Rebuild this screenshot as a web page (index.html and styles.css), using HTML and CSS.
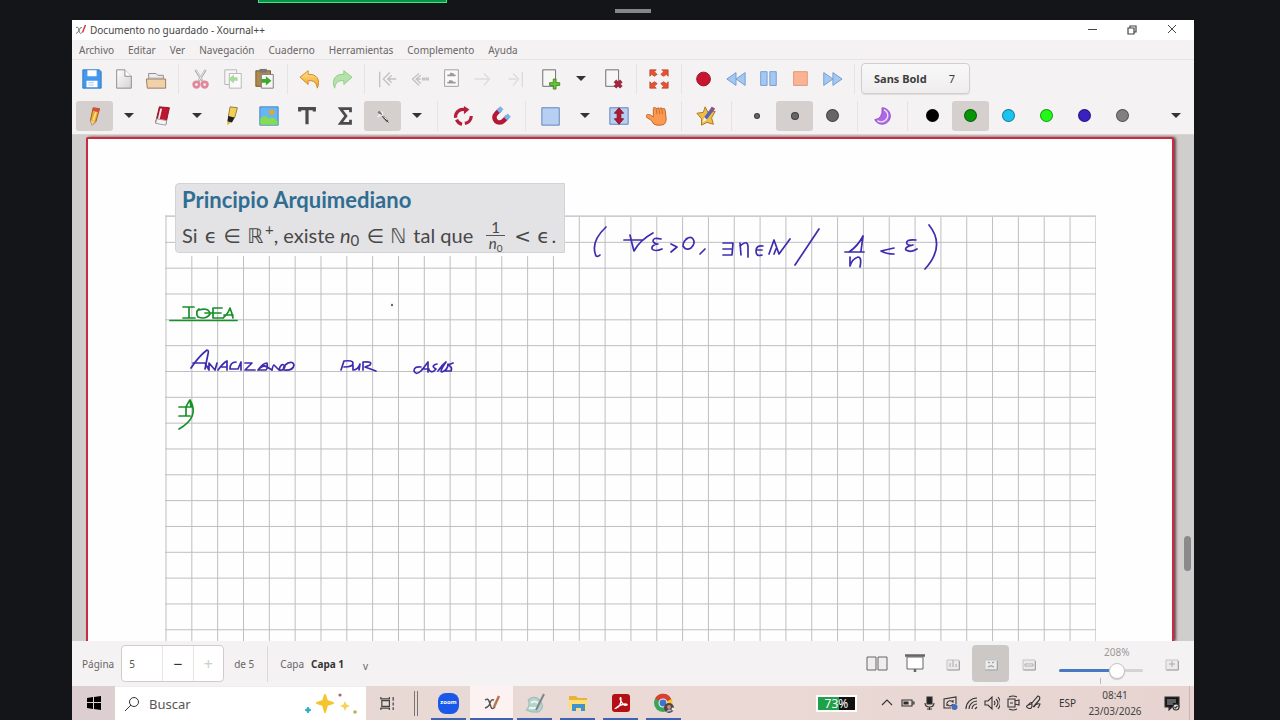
FILE: index.html
```html
<!DOCTYPE html>
<html lang="es">
<head>
<meta charset="utf-8">
<title>Documento no guardado - Xournal++</title>
<link rel="stylesheet" href="styles.css">
</head>
<body>
<svg class="defs" aria-hidden="true">
  <defs>
    <linearGradient id="gold" x1="0" y1="0" x2="0" y2="1"><stop offset="0" stop-color="#ffe08a"/><stop offset="1" stop-color="#f0a020"/></linearGradient>
    <linearGradient id="paper" x1="0" y1="0" x2="1" y2="1"><stop offset="0" stop-color="#fff"/><stop offset="1" stop-color="#d4d2d2"/></linearGradient>
    <symbol id="ghost" viewBox="0 0 14 14"><path d="M1 3h12v10H1z" fill="#ecebeb" stroke="#c5c3c3"/><path d="M1.500 13h12V4" fill="none" stroke="#a5a3a3"/></symbol>
  </defs>
</svg>

<div class="share-bar"><span class="share-frame"></span><span class="share-grip"></span></div>

<main class="window">
  <header class="titlebar">
    <svg class="app-mark" viewBox="0 0 12 12"><path d="M1 3.500q2-1 2.500 1l1 4q.5 2 2.500 0M7 3.500Q5 3 4 6T1 9.500" fill="none" stroke="#777" stroke-width="1"/><path d="M10.500 1 7.500 8.500" stroke="#d33b3b" stroke-width="1.500"/></svg>
    <h1 class="window-title">Documento no guardado - Xournal++</h1>
    <div class="window-controls">
      <button aria-label="Minimizar"><svg viewBox="0 0 12 12"><path d="M2 5.500h9" stroke="#444"/></svg></button>
      <button aria-label="Restaurar"><svg viewBox="0 0 12 12"><path d="M2 4h6v6H2zM4 4V2h6v6H8" fill="none" stroke="#444" stroke-width="1.200"/></svg></button>
      <button aria-label="Cerrar"><svg viewBox="0 0 12 12"><path d="m2 1 8 8M10 1l-8 8" stroke="#444"/></svg></button>
    </div>
  </header>

  <nav class="menubar">
    <button>Archivo</button><button>Editar</button><button>Ver</button><button>Navegación</button><button>Cuaderno</button><button>Herramientas</button><button>Complemento</button><button>Ayuda</button>
  </nav>

  <div class="toolbar main-tools">
    <button class="tool" aria-label="Guardar"><svg viewBox="0 0 24 24"><path d="M2 2h18l2 2v18H2z" fill="#4599ec" stroke="#2f76bd"/><path d="M7 2.500h10V9H7zM6 14h12v7H6z" fill="#fff"/><path d="M8 16h6M8 18.500h6" stroke="#a9c6e5"/></svg></button>
    <button class="tool" aria-label="Nuevo"><svg viewBox="0 0 24 24"><path d="M4 2h9l7 7v13H4z" fill="url(#paper)" stroke="#888"/><path d="M13 2v7h7" fill="#fff" stroke="#888"/></svg></button>
    <button class="tool" aria-label="Abrir"><svg viewBox="0 0 24 24"><path d="M4 15V6h8l2 2h6v8" fill="#efeded" stroke="#8a8580"/><path d="M1.500 12h21v10h-20z" fill="#f0d1a8" stroke="#93775c"/><path d="M3 11h18" stroke="#aaa"/></svg></button>
    <span class="sep"></span>
    <button class="tool" aria-label="Cortar"><svg viewBox="0 0 24 24"><path d="m6 2 8 13M17 2 9 15" stroke="#aaa" stroke-width="2.500"/><path d="m6.500 2 7 12M16.500 2l-7 12" stroke="#eee"/><g fill="none" stroke="#e0889c" stroke-width="3"><circle cx="7" cy="18" r="3"/><circle cx="16" cy="18" r="3"/></g></svg></button>
    <button class="tool" aria-label="Copiar"><svg viewBox="0 0 24 24"><path d="M3 2h13v16H3z" fill="#f5f5f4" stroke="#b5b5b3"/><path d="M8 6h13v16H8z" fill="#fafafa" stroke="#b5b5b3"/><path d="m7 12 6-5v3h4v4h-4v3z" fill="#a9d99f"/></svg></button>
    <button class="tool" aria-label="Pegar"><svg viewBox="0 0 24 24"><path d="M2 3h16v17H2z" fill="#b0884e" stroke="#73582e"/><path d="M6 1h8v4H6z" fill="#777"/><path d="M8 7h13v15H8z" fill="#f6f6f5" stroke="#777"/><path d="M8 12h5V9l6 5-6 5v-3H8z" fill="#3ca82f"/></svg></button>
    <span class="sep"></span>
    <button class="tool" aria-label="Deshacer"><svg viewBox="0 0 24 24"><path d="m1 10 9-7v4c9-1 14 6 10 15-1-6-4-9-10-8v4z" fill="url(#gold)" stroke="#c9872b"/></svg></button>
    <button class="tool" aria-label="Rehacer"><svg viewBox="0 0 24 24"><path d="m23 10-9-7v4C5 6 0 13 4 22c1-6 4-9 10-8v4z" fill="#b4e2a8" stroke="#8fca85"/></svg></button>
    <span class="sep"></span>
    <button class="tool" aria-label="Primera página"><svg viewBox="0 0 24 24" class="dim"><path d="M4 4v17M15 5l-7 7 7 7M22 12H12m5-4-4 4 4 4"/></svg></button>
    <button class="tool" aria-label="Página anterior"><svg viewBox="0 0 24 24" class="dim"><path d="m12 6-7 6 7 7M14 8l-5 4 5 5M10 12h4m2-1h2v2h-2zm4 0h2v2h-2z"/></svg></button>
    <button class="tool" aria-label="Ir a página"><svg viewBox="0 0 24 24"><path d="M5 2h15v18H5z" fill="#fafafa" stroke="#999"/><path d="M8 8h9M11 6l4 1M8 16h9M10 14l4 1" stroke="#999" stroke-width="2"/></svg></button>
    <button class="tool" aria-label="Página siguiente"><svg viewBox="0 0 24 24" class="dim faint"><path d="M3 12h15M13 6l6 6-6 7"/></svg></button>
    <button class="tool" aria-label="Última página"><svg viewBox="0 0 24 24" class="dim faint"><path d="M5 12h9M10 6l6 6-6 7M20 4v17"/></svg></button>
    <span class="split">
      <button class="tool" aria-label="Añadir página"><svg viewBox="0 0 24 24"><path d="M3 2h14v18H3z" fill="#f7f7f6" stroke="#666"/><path d="M14.500 12h3v4h4v3h-4v4h-3v-4h-4v-3h4z" fill="#6cc339" stroke="#3d8a1c"/></svg></button>
      <button class="arrow" aria-label="Tipo de página"></button>
    </span>
    <button class="tool" aria-label="Borrar página"><svg viewBox="0 0 24 24"><path d="M3 2h14v18H3z" fill="#f7f7f6" stroke="#666"/><path d="m13 14 7 7m0-7-7 7" stroke="#a32743" stroke-width="4"/></svg></button>
    <span class="sep"></span>
    <button class="tool" aria-label="Pantalla completa"><svg viewBox="0 0 24 24"><g fill="#e5532f" stroke="#b8432a" stroke-width=".8"><path d="M2 2h7L7 4l3 3-3 2-3-2-2 2zM22 2h-7l2 2-3 3 3 2 3-2 2 2zM2 22h7l-2-2 3-3-3-2-3 2-2-2zM22 22h-7l2-2-3-3 3-2 3 2 2-2z"/></g></svg></button>
    <span class="sep"></span>
    <button class="tool" aria-label="Grabar"><svg viewBox="0 0 24 24"><circle cx="11.500" cy="12" r="7.500" fill="#c9152f" stroke="#8f1022"/></svg></button>
    <button class="tool" aria-label="Retroceder"><svg viewBox="0 0 24 24"><path d="M12 5v14l-10-7zM22 5v14l-10-7z" fill="#a5c8f3" stroke="#7099cf"/></svg></button>
    <button class="tool" aria-label="Pausa"><svg viewBox="0 0 24 24"><path d="M4 4h7v15H4zM14 4h7v15h-7z" fill="#a5c8f3" stroke="#7099cf"/></svg></button>
    <button class="tool" aria-label="Detener"><svg viewBox="0 0 24 24"><path d="M5 4h15v15H5z" fill="#fbb393" stroke="#dd957a"/></svg></button>
    <button class="tool" aria-label="Avanzar"><svg viewBox="0 0 24 24"><path d="M3 5v14l10-7zM13 5v14l10-7z" fill="#a5c8f3" stroke="#7099cf"/></svg></button>
    <span class="sep"></span>
    <button class="font-button"><b>Sans Bold</b><span>7</span></button>
  </div>

  <div class="toolbar draw-tools">
    <button class="tool selected" aria-label="Lápiz"><svg viewBox="0 0 24 24"><path d="m10 3 7 1-4 14-4 4-2-5z" fill="#f4a528" stroke="#925a20"/><path d="m10 3 7 1-1 4-7-2z" fill="#d84a43"/><path d="m13 8-3 9" stroke="#ffe08a" stroke-width="2"/><path d="m7 17 5 1-3 4z" fill="#e9cda1"/></svg></button>
    <button class="arrow" aria-label="Opciones de lápiz"></button>
    <button class="tool" aria-label="Borrador"><svg viewBox="0 0 24 24"><path d="m8 2 11 1-4 18-11-2z" fill="#c2132f" stroke="#82152a"/><path d="m10 4-3 13" stroke="#f2f2f2" stroke-width="2"/><path d="m5 15 11 2-1 5-11-2z" fill="#f6f5f5" stroke="#999"/></svg></button>
    <button class="arrow" aria-label="Opciones de borrador"></button>
    <button class="tool" aria-label="Resaltador"><svg viewBox="0 0 24 24"><path d="m11 2 8 1-3 11-7-1z" fill="#f5cf52" stroke="#8c7640"/><path d="m9 12 7 2-3 5-5-1z" fill="#222"/><path d="m8 18 4 1-4 3z" fill="#e7b828"/></svg></button>
    <button class="tool" aria-label="Imagen"><svg viewBox="0 0 24 24"><path d="M2 2h20v20H2z" fill="#65b6f2" stroke="#477fba"/><circle cx="15" cy="8" r="3" fill="#e1a53a"/><path d="M2.500 15q5-6 9 0 5-4 10 3v3.500h-19z" fill="#85db51"/></svg></button>
    <button class="tool" aria-label="Texto"><svg viewBox="0 0 24 24"><path d="M4 7V4h16v3M12 4v17" fill="none" stroke="#4b4b4d" stroke-width="3.500"/></svg></button>
    <button class="tool" aria-label="Fórmula TeX"><svg viewBox="0 0 24 24"><path d="M18 8V4H7l6 8-6 8h11v-4" fill="none" stroke="#4b4b4d" stroke-width="3"/></svg></button>
    <button class="tool selected" aria-label="Reconocer formas"><svg viewBox="0 0 24 24"><path d="m7 7 10 11" stroke="#777" stroke-width="2.500"/><path d="m8 10 8 6M11 7l1 5M6 13l3-2" stroke="#fff" stroke-width="1.200"/><path d="m11 12 7 7" stroke="#333"/></svg></button>
    <button class="arrow" aria-label="Más formas"></button>
    <span class="sep"></span>
    <button class="tool" aria-label="Ajustar rotación"><svg viewBox="0 0 24 24"><path d="M4 14A8 8 0 0 1 14 5M21 12a8 8 0 0 1-7 8M11 21a8 8 0 0 1-6-5" fill="none" stroke="#b41e3b" stroke-width="3.500"/><path d="m13 1 6 4-6 5z" fill="#b41e3b"/></svg></button>
    <button class="tool" aria-label="Ajustar a la cuadrícula"><svg viewBox="0 0 24 24"><path d="M11 5 7 9c-6 6 2 14 8 8l4-4" fill="none" stroke="#b51836" stroke-width="5"/><path d="m13 3-4 4M21 11l-4 4" stroke="#76b4f0" stroke-width="5"/></svg></button>
    <span class="sep"></span>
    <button class="tool" aria-label="Seleccionar rectángulo"><svg viewBox="0 0 24 24"><path d="M2 3h19v19H2z" fill="#b7cff2" stroke="#587fb6"/></svg></button>
    <button class="arrow" aria-label="Más selecciones"></button>
    <button class="tool" aria-label="Espacio vertical"><svg viewBox="0 0 24 24"><path d="M2 3h20v18H2z" fill="#b7cff2" stroke="#587fb6"/><path d="m12 3 5 6h-3v6h3l-5 6-5-6h3V9H7z" fill="#b31935" stroke="#811529"/></svg></button>
    <button class="tool" aria-label="Mano"><svg viewBox="0 0 24 24"><path d="M8 13V4q0-2 2-1l2 1q1-2 3 0 1-2 3 0 3-1 3 2l1 9q0 7-6 7h-4q-4 0-6-5l-6-4q0-4 5-2z" fill="#fb9950" stroke="#bd6329"/><path d="m11 4 1 6m2-6 1 6m2-6 1 6" stroke="#c66a2b"/></svg></button>
    <span class="sep"></span>
    <button class="tool" aria-label="Pluma predeterminada"><svg viewBox="0 0 24 24"><path d="m10 2 3 6 8-1-4 7 2 7-7-2-6 3v-7L1 9l7-1z" fill="#f3bd45" stroke="#a57225"/><path d="m19 3-9 12" stroke="#5266ad" stroke-width="4"/><path d="m19 3-2 3" stroke="#a34b72" stroke-width="4"/><path d="m9 13 3 3-5 3z" fill="#eee"/></svg></button>
    <span class="sep"></span>
    <button class="tool" aria-label="Fino"><i class="dot fine"></i></button>
    <button class="tool selected" aria-label="Medio"><i class="dot medium"></i></button>
    <button class="tool" aria-label="Grueso"><i class="dot thick"></i></button>
    <span class="sep"></span>
    <button class="tool" aria-label="Relleno"><svg viewBox="0 0 24 24"><path d="M11 3a9 9 0 1 1-8 13q9-1 8-13z" fill="#ad69e5" stroke="#8c4bc6"/><path d="M13 5a7 7 0 1 1-7 12" fill="none" stroke="#efe2fa" stroke-width="1.500"/></svg></button>
    <span class="sep"></span>
    <button class="tool" aria-label="Negro"><i class="dot black"></i></button>
    <button class="tool selected" aria-label="Verde"><i class="dot green"></i></button>
    <button class="tool" aria-label="Celeste"><i class="dot cyan"></i></button>
    <button class="tool" aria-label="Verde claro"><i class="dot lime"></i></button>
    <button class="tool" aria-label="Azul"><i class="dot blue"></i></button>
    <button class="tool" aria-label="Gris"><i class="dot gray"></i></button>
    <button class="arrow overflow" aria-label="Más herramientas"></button>
  </div>

  <section class="canvas">
    <article class="page">
      <svg class="grid" viewBox="88 139 1084 502">
        <defs><pattern id="cells" x="165.500" y="216" width="25.830" height="25.830" patternUnits="userSpaceOnUse"><path d="M0 0V25.830M0 0H25.830" stroke="#bebec2" stroke-width="2"/></pattern></defs>
        <rect x="165" y="215.500" width="931" height="430" fill="url(#cells)"/>
        <path d="M165 216h931" stroke="#d2d2d5" stroke-width="1.500"/>
      </svg>
      <div class="theorem">
        <h2>Principio Arquimediano</h2>
        <p>Si <span class="m">ϵ ∈ ℝ</span><sup>+</sup>, existe <em>n</em><sub>0</sub> <span class="m">∈ ℕ</span> tal que <span class="fraction"><span>1</span><span><em>n</em><sub>0</sub></span></span> <span class="m">&lt; ϵ</span>.</p>
      </div>
      <svg class="ink" viewBox="88 139 1084 502" role="img" aria-label="(∀ε&gt;0, ∃n∈N / 1/n &lt; ε) — Idea — Analizando por casos — I)">
        <g class="ink-blue">
          <path d="M606 227q-16 15-10 29 2 1 4-1"/>
          <path d="M624 240l19 0M630 235q2 9 4 16 6-11 19-18"/>
          <path d="M661 239q-8-2-8 2 1 3 5 3-7 1-6 5 3 3 10 0"/>
          <path d="M671 244l6 3-6 5"/><path d="M688 238q-5 3-5 8 3 5 8 2 5-5 2-9-2-3-7 0M705 249l-5 5"/>
          <path d="M723 243h10l-1 12h-9M723 249h9M740 243l1 12M740 246q8-7 8 1v10M763 246q-7-1-7 5t6 4M757 250h5M769 254l5-14 5 14 11-15M774 254l2-5"/>
          <path d="M819 229l-24 36M849 252q9-6 14-16l-2 15M845 252h19M850 257v9q2-7 8-9 4 0 2 10"/>
          <path d="M894 248l-13 3q5 3 13 3M916 240q-11-1-9 4 2 2 6 1-9 2-7 5 5 3 11-1M929 225q17 21-4 44"/>
        </g>
        <g class="ink-green"><path d="M183 307h11M189 307v11M183 318h12M199 309q-4 3-1 8 8 3 12-3-1-7-11-4M222 308h-9v10h9M205 313h16M223 318q5-4 7-10 2 5 3 10M224 315h9M170 320.500h67"/><path d="M179 407h11M186 407v9M179 416h11M190 400q10 17-11 29M186 407q3-6 4-7l1 7"/></g>
        <g class="ink-blue"><path d="M191 368q8-12 16-18 2 0 1 4l-3 15M193 363h12l4 7v-7l6 7 2-7M218 370q5-7 9-9v9M220 367h7M236 362q-6 0-6 7h8l3-7v8M245 363h7l-7 7h10M258 370q5-7 9-7 1 6-1 7h-8M258 370q5-6 9-3l5 3q1-5 2-5l5 5q2-8 6-4-1 5-6 4M288 363q-6 4-4 7 9 1 10-5-1-4-6-2"/><path d="M341 370l3-9q9-1 9 2 0 4-9 4M353 365v5q5 0 7-6l-1 6M363 370v-8q10-1 7 3l-5 2 11 4"/><path d="M421 367q-7-1-7 4 2 5 8-1l6-8v10M422 369h7M437 364q-7 2-1 5-4 5-7 1M438 371q4-6 8-9-7 10-4 10 6-2 6-8M453 363l-5 2q5 2 3 6h-6"/></g>
        <circle cx="392" cy="305" r="1.200" fill="#5a7462"/>
      </svg>
    </article>
    <span class="scroll-thumb"></span>
  </section>

  <footer class="statusbar">
    <label for="page-number">Página</label>
    <div class="spinner"><input id="page-number" value="5"><button aria-label="Anterior">−</button><button class="disabled" aria-label="Siguiente">+</button></div>
    <span class="page-total">de 5</span>
    <div class="layer"><label for="layer">Capa</label><select id="layer"><option>Capa 1</option></select><span class="chevron">v</span></div>
    <div class="view-tools">
      <button aria-label="Dos páginas"><svg viewBox="0 0 22 22"><path d="M1 4h9v13H1zM12 4h9v13h-9z" fill="#eee" stroke="#666"/></svg></button>
      <button aria-label="Presentación"><svg viewBox="0 0 22 22"><path d="M3 4h16v12H3z" fill="#fff" stroke="#666"/><path d="M1 2.500h20M11 16v3" stroke="#666" stroke-width="2.500"/></svg></button>
      <button aria-label="Tamaño real"><svg viewBox="0 0 22 22"><use href="#ghost" x="4" y="4" width="14" height="14"/><path d="M8 14v-4m3 4V7m3 7v-3" stroke="#aaa"/></svg></button>
      <button class="selected" aria-label="Ajustar zoom"><svg viewBox="0 0 22 22"><use href="#ghost" x="4" y="4" width="14" height="14"/><path d="m8 9 2 1m4-1-2 1m-4 4 2-1h2l2 1" stroke="#888" fill="none"/></svg></button>
      <button aria-label="Alejar"><svg viewBox="0 0 22 22"><use href="#ghost" x="4" y="4" width="14" height="14"/><path d="M7 11h8v2H7z" stroke="#aaa" fill="#fff"/></svg></button>
      <div class="zoom"><label for="zoom">208%</label><input id="zoom" type="range" min="0" max="100" value="73"><span class="zoom-tick"></span></div>
      <button aria-label="Acercar"><svg viewBox="0 0 22 22"><use href="#ghost" x="4" y="4" width="14" height="14"/><path d="M11 8v6M8 11h6" stroke="#aaa"/></svg></button>
    </div>
  </footer>

  <nav class="taskbar">
    <button class="start" aria-label="Inicio"><svg viewBox="0 0 16 16"><path d="m1 3 6-1v5H1zm7-1 7-1v6H8zM1 8h6v6l-6-1zm7 0h7v7l-7-1z"/></svg></button>
    <div class="search">
      <svg class="lens" viewBox="0 0 16 16"><circle cx="10" cy="6" r="4.500" fill="none" stroke="#333"/><path d="m7 9-6 6" stroke="#333"/></svg>
      <input aria-label="Buscar" placeholder="Buscar">
      <svg class="sparkles" viewBox="0 0 54 24"><path d="m21 3 2 6 6 2-6 2-2 7-2-7-6-2 6-2z" fill="#f5c431" stroke="#f5c431" stroke-width="2" stroke-linejoin="round"/><path d="m4 15 1 2 2 1-2 1-1 2-1-2-2-1 2-1z" fill="#2daac9" stroke="#2daac9"/><path d="m41 9 1.500 3.500L46 14l-3.500 1.500L41 19l-1.500-3.500L36 14l3.500-1.500z" fill="#f5d356"/><circle cx="36" cy="3" r="1.600" fill="#a4656f"/><circle cx="51" cy="20" r="1.800" fill="#b7b454"/></svg>
    </div>
    <button class="task-view" aria-label="Vista de tareas"><svg viewBox="0 0 18 18"><path d="M2 2v2h9V2M2 16v-2h9v2M3 6h8v6H3zM15 2v4m0 2v3m0 2v3" fill="none" stroke="#444" stroke-width="1.300"/></svg></button>
    <span class="double-bar"></span>
    <div class="apps">
      <button aria-label="Zoom"><span class="zoom-app">zoom</span></button>
      <button class="active" aria-label="Xournal++"><svg viewBox="0 0 22 22"><path d="M4 8q3-2 4 1l2 6q1 3 4 0M13 8q-3-1-4 3t-5 5" fill="none" stroke="#555" stroke-width="1.400"/><path d="m18 4-5 11" stroke="#ba7653" stroke-width="2.500"/></svg></button>
      <button aria-label="OpenBoard"><svg viewBox="0 0 22 22"><path d="M4 8q5-5 11-1 7 8 0 13-8 1-13-2 5-5 2-10z" fill="#b5d2cc" stroke="#98bbb7"/><path d="M5 16h8M7 11q3-3 7 0" stroke="#eef7ef" stroke-width="2" fill="none"/><path d="m20 2-8 16" stroke="#7a8687" stroke-width="2"/></svg></button>
      <button aria-label="Explorador"><svg viewBox="0 0 22 22"><path d="M2 4h7l2 2h9v12H2z" fill="#e7b33c"/><path d="M2 8h18v10H2z" fill="#ffdf70"/><path d="M5 19v-7h13v7h-4v-3H9v3z" fill="#4193d0"/></svg></button>
      <button aria-label="Acrobat"><svg viewBox="0 0 22 22"><rect x="2" y="2" width="18" height="18" rx="3" fill="#b40f14"/><path d="M6 16c4-1 5-5 5-9 0-3-2-1 0 2 2 4 4 5 6 4 1-2-7-1-11 3z" fill="none" stroke="#fff" stroke-width="1.300"/></svg></button>
      <button aria-label="Chrome"><svg viewBox="0 0 22 22"><circle cx="10" cy="11" r="9" fill="#39a55a"/><path d="M10 11 2 6.500A9 9 0 0 1 18.500 8z" fill="#d8402f"/><path d="M11 11 18.500 7A9 9 0 0 1 12 20z" fill="#f4c334"/><circle cx="10" cy="11" r="4.500" fill="#eee"/><circle cx="10" cy="11" r="3.400" fill="#3974cf"/><circle cx="16" cy="16" r="5" fill="#514346"/><circle cx="16" cy="15" r="2" fill="#c98f72"/><path d="M13 20q3-5 6-1" fill="#9fc0d6"/><circle cx="20" cy="17" r="1.500" fill="#eee"/></svg></button>
    </div>
    <div class="tray">
      <span class="battery">73%</span>
      <svg viewBox="0 0 16 16"><path d="m3 10 5-5 5 5"/></svg>
      <svg viewBox="0 0 16 16"><path d="M2 5h10v6H2zM12 7h2v2h-2"/><path d="M4 7h4v2H4z" class="solid"/></svg>
      <svg viewBox="0 0 16 16"><path d="M6 2h5v7H6z" class="solid"/><path d="M4 8q0 4 4.500 4T13 8M8.500 12v3M6 14h5"/></svg>
      <svg viewBox="0 0 16 16"><path d="M14 9V2L2 4v9h7M5 8q2-4 6-1V5m0 4q-3 4-6 0v2"/><circle cx="12.500" cy="12" r="3" fill="#426dc0" stroke="none"/></svg>
      <svg viewBox="0 0 16 16"><path d="M3 14A11 11 0 0 1 14 3M6 14a8 8 0 0 1 8-8M9 14a5 5 0 0 1 5-5M12 14l2-2"/></svg>
      <svg viewBox="0 0 16 16"><path d="M1 6h3l4-4v12l-4-4H1zM10 6q2 2 0 4m2-6q4 4 0 8m2-10q5 6 0 12"/></svg>
      <svg viewBox="0 0 16 16"><path d="M4 2q4-2 8 0M4 14q4 2 8 0M3 4h7v8H3zM10 6l4-1v5l-4-1M5 8h3"/></svg>
      <svg viewBox="0 0 16 16"><path d="M2 10q4-5 4 0t-4 3 3-4l7-8q3 1 1 4l-6 7q4-4 7-3-2 5-2 3M8 12l6-8"/></svg>
      <span class="language">ESP</span>
      <time datetime="2026-03-23T08:41">08:41<br>23/03/2026</time>
      <button class="notifications" aria-label="Notificaciones"><svg viewBox="0 0 16 16"><path d="M1 2h14v10H8l-3 3v-3H1z" fill="#161616"/><path d="M3 5h9M3 7h9M3 9h6" stroke="#aaa"/><circle cx="12" cy="12" r="3" fill="#ddd"/><path d="m10.500 12 1 1 2-2"/></svg></button>
    </div>
  </nav>
</main>
</body>
</html>
```

FILE: styles.css
```css
* { box-sizing: border-box; }
body {
  margin: 0;
  height: 100vh;
  display: flex;
  flex-direction: column;
  overflow: hidden;
  background: #131519;
  font: 10px/16px "Noto Sans", "Open Sans", sans-serif;
  color: #666;
}
button, input, select { font: inherit; color: inherit; border: 0; background: none; padding: 0; margin: 0; }
svg { display: block; flex: none; }
.defs { position: absolute; width: 0; height: 0; }

.share-bar { position: relative; height: 20px; flex: none; padding: 9px 86px 0 72px; display: flex; justify-content: center; }
.share-frame { position: absolute; left: 258px; top: 0; width: 189px; height: 3px; background: #079447; border: solid #3fe48b; border-width: 0 1px 1px; }
.share-grip { width: 36px; height: 4px; background: #858688; }

.window { flex: 1; min-height: 0; margin: 0 86px 0 72px; display: flex; flex-direction: column; background: #f5f2f3; overflow: hidden; }
.titlebar { height: 20px; flex: none; background: #fff; display: flex; align-items: center; padding-left: 3px; }
.app-mark { width: 12px; height: 12px; }
.window-title { margin: 0 0 0 3px; font-size: 10px; font-weight: 400; color: #444; }
.window-controls { margin-left: auto; display: flex; padding-right: 2px; }
.window-controls button { width: 40px; display: flex; justify-content: center; }
.window-controls svg { width: 12px; height: 12px; }

.menubar { height: 20px; flex: none; display: flex; align-items: center; gap: 14px; padding-left: 7px; border-bottom: 1px solid #e8e4e5; }

.toolbar { height: 37px; flex: none; display: flex; align-items: center; padding: 0 4px; }
.tool { width: 32px; height: 30px; flex: none; display: flex; align-items: center; justify-content: center; border-radius: 3px; }
.tool svg { width: 22px; height: 22px; }
.selected { background: #d5d0ce; }
.sep { width: 13px; height: 30px; flex: none; background: linear-gradient(#e7e3e4, #e7e3e4) center / 1px 100% no-repeat; }
.arrow { width: 28px; height: 30px; flex: none; display: flex; align-items: center; justify-content: center; }
.arrow::after { content: ""; border: solid transparent; border-width: 5px 5px 0; border-top-color: #333; }
.split { display: flex; padding: 0 3px 0 4px; }
.dim { fill: none; stroke: #c3c1c2; stroke-width: 1.5; }
.faint { stroke: #dddbdc; }
.font-button { width: 109px; height: 31px; display: flex; align-items: center; justify-content: space-between; padding: 0 14px 0 12px; border: 1px solid #d2cecc; border-radius: 4px; background: linear-gradient(#f9f8f8, #efedee); color: #3d3d3d; font-size: 11px; box-shadow: 0 1px 1px #e0dcdc; }

.draw-tools { gap: 1px; }
.draw-tools .tool { width: 37px; }
.draw-tools .arrow { width: 29px; }
.draw-tools .sep { width: 11px; }
.draw-tools .overflow { margin-left: auto; }
.dot { width: 13px; height: 13px; border-radius: 50%; background: #666; border: 1px solid #0006; }
.fine { width: 6px; height: 6px; }
.medium { width: 8px; height: 8px; }
.black { background: #000; }
.green { background: #079407; }
.cyan { background: #19c4f1; }
.lime { background: #20fa16; }
.blue { background: #3920c1; }
.gray { background: #808080; }

.canvas { position: relative; flex: 1; min-height: 0; display: flex; padding: 2px 20px 0 14px; background: #d0cecd; border-top: 1px solid #ddd5cb; overflow: hidden; }
.page { position: relative; flex: 1; overflow: hidden; background: #fefefe; border: 2px solid #c82b43; border-bottom: 0; border-radius: 2px 3px 0 0; box-shadow: 2px 0 3px #6b4349; }
.grid, .ink { position: absolute; left: 0; top: 0; width: 1084px; height: 502px; }
.ink path { fill: none; stroke-width: 1.7; stroke-linecap: round; stroke-linejoin: round; }
.ink-blue { stroke: #3d2cb0; }
.ink-green { stroke: #17902a; }
.theorem { position: absolute; left: 87px; top: 44px; width: 390px; height: 70px; padding: 2px 6px; border: 1px solid #d3d3d7; border-radius: 4px 0 0 4px; background: #e3e2e5; box-shadow: 0 3px #fefefe; font-family: Lato, sans-serif; color: #484848; }
.theorem h2 { margin: 0; font-size: 22px; line-height: 28px; color: #306d92; }
.theorem p { margin: 0; padding-top: 2px; font-size: 20px; line-height: 38px; white-space: nowrap; }
.theorem sup, .theorem sub { font-size: 15px; line-height: 0; }
.theorem sub { vertical-align: -3px; }
.m { margin: 0 2px; font-family: "DejaVu Sans", sans-serif; font-size: 20px; line-height: 0; }
.fraction { display: inline-flex; flex-direction: column; align-items: center; vertical-align: middle; margin: 0 2px 4px 8px; font-size: 15px; line-height: 15px; }
.fraction > span:first-child { border-bottom: 1px solid #555; padding: 0 5px; }
.theorem .fraction sub { font-size: 10px; }
.scroll-thumb { position: absolute; right: 3px; bottom: 70px; width: 7px; height: 35px; border-radius: 4px; background: #8b8989; }

.statusbar { height: 45px; flex: none; display: flex; align-items: center; padding-left: 10px; }
.spinner { width: 103px; height: 37px; margin-left: 7px; display: flex; border: 1px solid #d0cccb; border-radius: 4px; background: #fff; overflow: hidden; }
.spinner input { width: 40px; padding-left: 7px; color: #555; }
.spinner button { flex: 1; border-left: 1px solid #e7e4e4; font-size: 16px; color: #333; }
.spinner .disabled { color: #ccc; }
.page-total { margin-left: 10px; }
.layer { display: flex; align-items: center; height: 36px; margin-left: 13px; padding-left: 12px; border-left: 1px solid #ddd9da; }
.layer select { width: 52px; margin-left: 7px; appearance: none; font-weight: 700; color: #333; }
.chevron { padding-top: 4px; }
.view-tools { margin-left: auto; display: flex; align-items: center; gap: 1px; padding-right: 4px; }
.view-tools button { width: 37px; height: 37px; display: flex; align-items: center; justify-content: center; border-radius: 4px; }
.view-tools svg { width: 22px; height: 22px; }
.view-tools .selected { background: #cbc8c6; }
.zoom { position: relative; width: 104px; height: 45px; display: flex; flex-direction: column; padding: 3px 9px 0 11px; color: #999; }
.zoom label { padding-left: 45px; }
.zoom input { appearance: none; width: 84px; height: 20px; }
.zoom input::-webkit-slider-runnable-track { height: 3px; background: linear-gradient(90deg, #4778c1 70%, #d7d3d3 70%); border-radius: 2px; }
.zoom input::-webkit-slider-thumb { appearance: none; width: 16px; height: 16px; margin-top: -6px; border: 1px solid #c9c5c5; border-radius: 50%; background: #fff; box-shadow: 0 1px 1px #ccc; }
.zoom-tick { position: absolute; left: 52px; top: 37px; width: 1px; height: 6px; background: #bbb; }

.taskbar { height: 34px; flex: none; display: flex; align-items: stretch; background: linear-gradient(90deg, #dccdd0, #e9d9d4 30%, #ead9d5 60%, #e7d4d0); color: #333; }
.taskbar button { display: flex; align-items: center; justify-content: center; }
.start { width: 43px; }
.start svg { width: 16px; height: 16px; }
.search { width: 251px; display: flex; align-items: center; background: #fff; padding: 0 8px 0 9px; border-top: 1px solid #eee; }
.lens { width: 16px; height: 16px; }
.search input { flex: 1; min-width: 0; margin-left: 9px; font-size: 13px; outline: 0; }
.search input::placeholder { color: #555; opacity: 1; }
.sparkles { width: 54px; height: 24px; }
.task-view { width: 43px; }
.task-view svg { width: 17px; height: 17px; }
.double-bar { width: 4px; height: 25px; margin: 5px 9px 0 5px; border: solid #7d7472; border-width: 0 1px; }
.apps { display: flex; }
.apps button { width: 43px; border: solid transparent; border-width: 0 4px; background: linear-gradient(#3f62b5, #3f62b5) bottom / 100% 2px no-repeat padding-box; }
.apps .active { border: 0; background: linear-gradient(#3f62b5, #3f62b5) bottom / 100% 2px no-repeat #fbf2f1; }
.apps svg { width: 22px; height: 22px; }
.zoom-app { width: 21px; height: 21px; border-radius: 8px; background: #1958e8; color: #fff; font-size: 6px; line-height: 19px; font-weight: 700; }
.tray { margin-left: auto; display: flex; align-items: center; gap: 5px; padding-right: 4px; line-height: 16px; }
.tray svg { width: 16px; height: 16px; fill: none; stroke: #333; stroke-width: 1.1; }
.tray .solid { fill: #222; }
.battery { width: 41px; height: 17px; margin-right: 17px; border: 2px solid #fff; background: linear-gradient(90deg, #1fa149 56%, #111 56%); color: #fff; font-size: 12px; line-height: 13px; text-align: center; }
.language { margin-left: 12px; }
.tray time { width: 64px; margin-left: 2px; text-align: center; color: #444; }
.notifications { width: 36px; height: 34px; margin-left: 2px; border-right: 1px solid #c7b8b5; }
```
